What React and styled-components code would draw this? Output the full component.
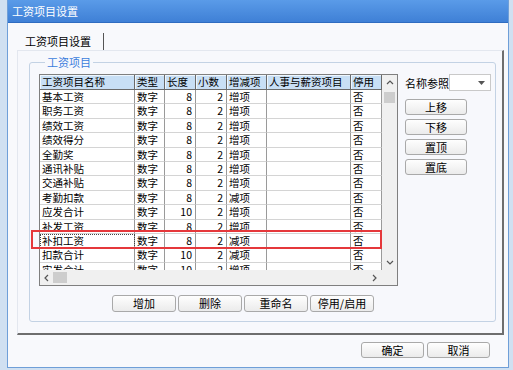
import React from 'react';
import styled, { createGlobalStyle } from 'styled-components';

const GlobalStyle = createGlobalStyle`
  html, body { margin: 0; padding: 0; }
  body {
    font-family: "Noto Sans CJK SC", "Noto Sans", sans-serif;
    font-size: 11px;
    color: #000;
  }
`;

const Screen = styled.div`
  width: 513px;
  height: 370px;
  box-sizing: border-box;
  padding: 0 4px 2px 7px;
  background: #d0e0f1;
  display: flex;
`;

const Window = styled.div`
  flex: 1;
  display: flex;
  flex-direction: column;
  border: 1px solid #6f9fd8;
  border-top: none;
  background: #f8f9fc;
`;

const TitleBar = styled.div`
  height: 22px;
  border-bottom: 1px solid #2f6cc0;
  background: linear-gradient(#5a9be8, #3f80d6);
  color: #fff;
  padding-left: 4px;
  display: flex;
  align-items: center;
`;

const Body = styled.div`
  flex: 1;
  display: flex;
  flex-direction: column;
  padding: 10px 4px 9px 9px;
`;

const TabStrip = styled.div`
  height: 17px;
  display: flex;
`;

const Tab = styled.div`
  width: 78px;
  padding-left: 8px;
  border-right: 1px solid #555;
  line-height: 17px;
`;

const Panel = styled.div`
  flex: 1;
  border-top: 1px solid #e3e7ef;
  border-left: 1px solid #e3e7ef;
  border-right: 2px solid #6e6e6e;
  border-bottom: 2px solid #6e6e6e;
  padding: 4px 6px 0 11px;
  background: #f7f8fc;
`;

const Group = styled.fieldset`
  margin: 0;
  padding: 5px 3px 9px 9px;
  border: 1px solid #c3d2e4;
  border-radius: 3px;
  min-width: 0;
`;

const Legend = styled.legend`
  padding: 0 2px;
  margin-left: 6px;
  color: #3b7ddd;
  line-height: 14px;
`;

const Upper = styled.div`
  display: flex;
  align-items: flex-start;
`;

const GridWrap = styled.div`
  position: relative;
  width: 359px;
  height: 212px;
  box-sizing: border-box;
  border: 1px solid #7f7f7f;
  background: #fff;
  display: grid;
  grid-template-columns: 1fr 15px;
  grid-template-rows: 1fr 15px;
`;

const Table = styled.div`
  overflow: hidden;
  display: grid;
  grid-template-columns: 95px 30px 31px 31px 40px 84px 31px;
  grid-template-rows: 15px;
  grid-auto-rows: 14.4px;
  align-content: start;
  font-size: 10.5px;
`;

const HeadCell = styled.div`
  box-sizing: border-box;
  background: #c8dff5;
  border-right: 1px solid #6a6a6a;
  border-bottom: 1px solid #6a6a6a;
  box-shadow: inset 1px 1px #eef6fd;
  padding: 0 2px;
  line-height: 14px;
  white-space: nowrap;
`;

const Cell = styled.div`
  box-sizing: border-box;
  border-right: 1px solid #9a9a9a;
  border-bottom: 1px solid #d4d4d4;
  padding: 0 ${({ $align }) => ($align === 'right' ? '3px' : '2px')};
  text-align: ${({ $align }) => $align || 'left'};
  line-height: 13.4px;
  white-space: nowrap;
  outline: ${({ $focus }) => ($focus ? '1px dotted #444' : 'none')};
  outline-offset: -1px;
`;

const VScroll = styled.div`
  background: #f0f0f0;
  display: flex;
  flex-direction: column;
  align-items: center;
`;

const HScroll = styled.div`
  background: #f0f0f0;
  display: flex;
  align-items: center;
`;

const Corner = styled.div`
  background: #f0f0f0;
`;

const ArrowBox = styled.div`
  width: ${({ $w }) => $w || 15}px;
  height: 15px;
  display: flex;
  align-items: center;
  justify-content: center;
  flex: none;
`;

const Thumb = styled.div`
  background: #cdcdcd;
  width: ${({ $w }) => $w}px;
  height: ${({ $h }) => $h}px;
  margin: ${({ $m }) => $m};
  flex: none;
`;

const Spacer = styled.div`
  flex: 1;
`;

const Highlight = styled.div`
  position: absolute;
  left: -9px;
  top: 155px;
  width: 351px;
  height: 19px;
  box-sizing: border-box;
  border: 2px solid #e5383b;
  pointer-events: none;
`;

const Side = styled.div`
  width: 86px;
  margin-left: 7px;
  display: flex;
  flex-direction: column;
  gap: 4px;
`;

const RefRow = styled.div`
  height: 17px;
  display: flex;
  align-items: center;
  justify-content: space-between;
  margin-bottom: 4px;
`;

const Select = styled.div`
  width: 42px;
  height: 17px;
  box-sizing: border-box;
  border: 1px solid #c9c9c9;
  background: #fff;
  display: flex;
  align-items: center;
  justify-content: flex-end;
  padding-right: 5px;
`;

const Button = styled.button`
  width: ${({ $w }) => $w}px;
  height: ${({ $h }) => $h || 16}px;
  padding: 0;
  border: 1px solid #a9a9a9;
  border-radius: 3px;
  background: linear-gradient(#fefefe, #ebebeb);
  font: inherit;
  color: #000;
  line-height: 1;
`;

const ButtonRow = styled.div`
  display: flex;
  gap: 2px;
  margin-top: 9px;
  padding-left: 73px;
`;

const Footer = styled.div`
  display: flex;
  justify-content: flex-end;
  gap: 3px;
  margin-top: 7px;
  padding-right: 14px;
`;

const Chevron = ({ dir }) => {
  const d = {
    up: 'M1 5 L4 2 L7 5',
    down: 'M1 2 L4 5 L7 2',
    left: 'M5 1 L2 4 L5 7',
    right: 'M2 1 L5 4 L2 7',
  }[dir];
  const vertical = dir === 'up' || dir === 'down';
  return (
    <svg width={vertical ? 8 : 7} height={vertical ? 7 : 8} viewBox={vertical ? '0 0 8 7' : '0 0 7 8'}>
      <path d={d} fill="none" stroke="#555" strokeWidth="1.2" />
    </svg>
  );
};

const columns = ['工资项目名称', '类型', '长度', '小数', '增减项', '人事与薪资项目', '停用'];

const rows = [
  ['基本工资', 8, '增项'],
  ['职务工资', 8, '增项'],
  ['绩效工资', 8, '增项'],
  ['绩效得分', 8, '增项'],
  ['全勤奖', 8, '增项'],
  ['通讯补贴', 8, '增项'],
  ['交通补贴', 8, '增项'],
  ['考勤扣款', 8, '减项'],
  ['应发合计', 10, '增项'],
  ['补发工资', 8, '增项'],
  ['补扣工资', 8, '减项'],
  ['扣款合计', 10, '减项'],
  ['实发合计', 10, '增项'],
];

const App = () => {
  return (
    <>
      <GlobalStyle />
      <Screen>
        <Window>
          <TitleBar>工资项目设置</TitleBar>
          <Body>
            <TabStrip>
              <Tab>工资项目设置</Tab>
            </TabStrip>
            <Panel>
              <Group>
                <Legend>工资项目</Legend>
                <Upper>
                  <GridWrap>
                    <Table>
                      {columns.map(c => <HeadCell key={c}>{c}</HeadCell>)}
                      {rows.map(([name, len, kind], i) => (
                        <React.Fragment key={name}>
                          <Cell $focus={i === 10}>{name}</Cell>
                          <Cell>数字</Cell>
                          <Cell $align="right">{len}</Cell>
                          <Cell $align="right">2</Cell>
                          <Cell>{kind}</Cell>
                          <Cell />
                          <Cell>否</Cell>
                        </React.Fragment>
                      ))}
                    </Table>
                    <VScroll>
                      <ArrowBox><Chevron dir="up" /></ArrowBox>
                      <Thumb $w={11} $h={11} $m="2px 0 0" />
                      <Spacer />
                      <ArrowBox><Chevron dir="down" /></ArrowBox>
                    </VScroll>
                    <HScroll>
                      <ArrowBox $w={13}><Chevron dir="left" /></ArrowBox>
                      <Thumb $w={14} $h={11} $m="0" />
                      <Spacer />
                      <ArrowBox><Chevron dir="right" /></ArrowBox>
                    </HScroll>
                    <Corner />
                    <Highlight />
                  </GridWrap>
                  <Side>
                    <RefRow>
                      名称参照
                      <Select>
                        <svg width="7" height="4" viewBox="0 0 7 4">
                          <path d="M0 0 H7 L3.5 4 Z" fill="#555" />
                        </svg>
                      </Select>
                    </RefRow>
                    <Button $w={62}>上移</Button>
                    <Button $w={62}>下移</Button>
                    <Button $w={62}>置顶</Button>
                    <Button $w={62}>置底</Button>
                  </Side>
                </Upper>
                <ButtonRow>
                  <Button $w={64} $h={17}>增加</Button>
                  <Button $w={64} $h={17}>删除</Button>
                  <Button $w={64} $h={17}>重命名</Button>
                  <Button $w={64} $h={17}>停用/启用</Button>
                </ButtonRow>
              </Group>
            </Panel>
            <Footer>
              <Button $w={63}>确定</Button>
              <Button $w={63}>取消</Button>
            </Footer>
          </Body>
        </Window>
      </Screen>
    </>
  );
};

export default App;
